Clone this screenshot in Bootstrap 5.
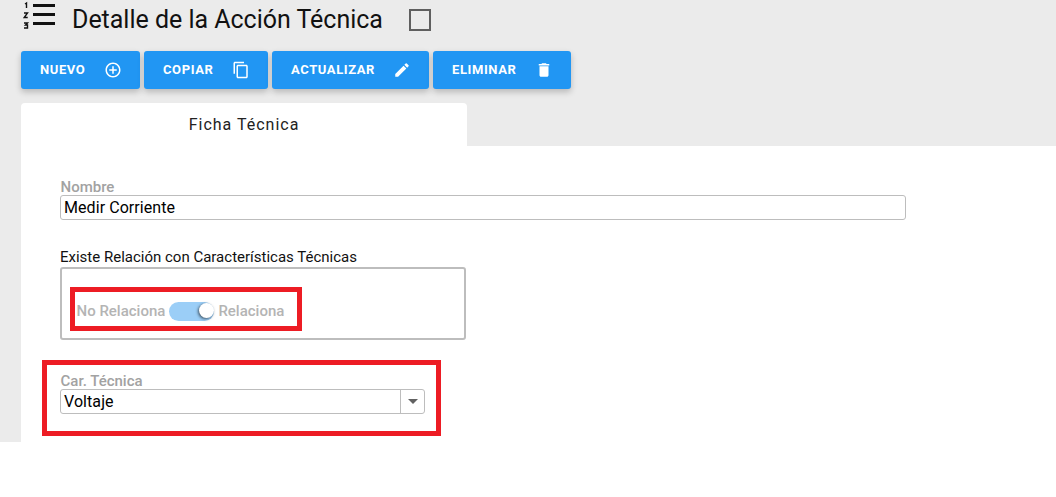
<!DOCTYPE html>
<html lang="es">
<head>
<meta charset="utf-8">
<title>Detalle de la Acción Técnica</title>
<link rel="stylesheet" href="https://cdn.jsdelivr.net/npm/bootstrap@5.3.0/dist/css/bootstrap.min.css">
<style>
html,body{height:497px;overflow:hidden;background:#fff;font-family:Roboto,"Liberation Sans",sans-serif;color:#000}
.app-shell{height:442px;background:#ebebeb;padding-left:21px;display:flex;flex-direction:column;position:relative}
.head-row{height:40px;align-items:center}
.head-icon{margin-left:2px;width:34px;height:32px;margin-top:-11px;flex:none}
.head-title{font-size:25px;font-weight:400;line-height:40px;margin:0 0 0 15px;color:#111;letter-spacing:-.02px}
.head-check{width:22px;height:22px;border:2px solid #5f5f5f;margin-left:26px;margin-top:-1px;flex:none}
.act-row{margin-top:11px;gap:4px;height:38px}
.act-btn{background:#2196f3;color:#fff;border:0;border-radius:3px;height:38px;padding:0 18px 0 19px;display:flex;align-items:center;justify-content:space-between;font-size:13px;font-weight:700;letter-spacing:.6px;box-shadow:0 3px 6px rgba(0,0,0,.22);flex:none}
.act-btn svg{width:18px;height:18px;fill:#fff;flex:none}
.btn-nuevo{width:119px}.btn-copiar{width:124px}.btn-actualizar{width:157px}.btn-eliminar{width:138px}
.tab-item{margin-top:14px;width:446px;height:43px;background:#fff;border-radius:4px 4px 0 0;text-align:center;font-size:16px;letter-spacing:1px;line-height:43px;color:#222}
.tab-body{flex:1;background:#fff;padding:33px 0 0 39px;position:relative}
.fld-label{display:block;font-size:15px;font-weight:500;line-height:16px;color:#a2a2a2;margin:0;padding-left:.5px}
.fld-input{display:block;border:1px solid #bdbdbd;border-radius:3px;background:#fff;height:25px;line-height:23px;padding-left:3px;font-size:16px;letter-spacing:.07px;color:#000}
.name-input{width:846px}
.group-label{font-size:15px;line-height:16px;color:#111;margin-top:29px}
.group-box{width:406px;height:73px;margin-top:2px;border:2px solid #bdbdbd;border-radius:3px;padding:15px 0 0 14.500px;align-items:center}
.toggle-text{font-size:15px;font-weight:500;color:#b4b4b4;line-height:20px}
.toggle-track{width:45px;height:19px;border-radius:10px;background:#9bcef7;margin:0 4px 0 4px;position:relative;flex:none}
.toggle-knob{position:absolute;right:0;top:1px;width:15px;height:15px;border-radius:50%;background:#fff;box-shadow:-1px 1px 3px rgba(0,0,0,.6)}
.car-label{margin-top:33px}
.select-wrap{width:365px;height:25px;display:flex;border:1px solid #bdbdbd;border-radius:3px}
.select-value{flex:1;line-height:23px;padding-left:3px;font-size:16px;letter-spacing:.07px}
.select-arrow{width:24px;border-left:1px solid #bdbdbd;display:flex;align-items:center;justify-content:center}
.select-arrow i{border-left:5px solid transparent;border-right:5px solid transparent;border-top:5px solid #616161;display:block}
.red-mark{position:absolute;border:5px solid #ed1c24;pointer-events:none}
.mark-a{left:70px;top:287px;width:232px;height:44px}
.mark-b{left:42px;top:360px;width:399px;height:76px}
</style>
</head>
<body>
<div class="app-shell">
  <div class="d-flex head-row">
    <svg class="head-icon" viewBox="0 0 34 32" aria-hidden="true">
      <g fill="#111"><rect x="10" y="5" width="22" height="3"/><rect x="10" y="14" width="22" height="3"/><rect x="10" y="23" width="22" height="3"/></g>
      <g fill="none" stroke="#111" stroke-width="1.4"><path d="M2 5l1.500-1V9"/><path d="M1 14h3.500L1.200 18.500h3.500"/><path d="M1 24h3.500L2.500 26h2v3H1"/></g>
    </svg>
    <h1 class="head-title">Detalle de la Acción Técnica</h1>
    <div class="head-check"></div>
  </div>
  <div class="d-flex act-row">
    <button class="act-btn btn-nuevo">NUEVO
      <svg viewBox="0 0 24 24"><path d="M13 7h-2v4H7v2h4v4h2v-4h4v-2h-4V7zm-1-5C6.480 2 2 6.480 2 12s4.480 10 10 10 10-4.480 10-10S17.520 2 12 2zm0 18c-4.410 0-8-3.590-8-8s3.590-8 8-8 8 3.590 8 8-3.590 8-8 8z"/></svg></button>
    <button class="act-btn btn-copiar">COPIAR
      <svg viewBox="0 0 24 24"><path d="M16 1H4c-1.100 0-2 .9-2 2v14h2V3h12V1zm3 4H8c-1.100 0-2 .9-2 2v14c0 1.100.9 2 2 2h11c1.100 0 2-.9 2-2V7c0-1.100-.9-2-2-2zm0 16H8V7h11v14z"/></svg></button>
    <button class="act-btn btn-actualizar">ACTUALIZAR
      <svg viewBox="0 0 24 24"><path d="M3 17.250V21h3.750L17.810 9.940l-3.750-3.750L3 17.250zM20.710 7.040a1 1 0 0 0 0-1.410l-2.340-2.340a1 1 0 0 0-1.410 0l-1.830 1.830 3.750 3.750 1.830-1.830z"/></svg></button>
    <button class="act-btn btn-eliminar">ELIMINAR
      <svg viewBox="0 0 24 24"><path d="M6 19c0 1.100.9 2 2 2h8c1.100 0 2-.9 2-2V7H6v12zM19 4h-3.500l-1-1h-5l-1 1H5v2h14V4z"/></svg></button>
  </div>
  <div class="tab-item">Ficha Técnica</div>
  <div class="tab-body">
    <label class="fld-label">Nombre</label>
    <div class="fld-input name-input">Medir Corriente</div>
    <div class="group-label">Existe Relación con Características Técnicas</div>
    <div class="d-flex group-box">
      <span class="toggle-text">No Relaciona</span>
      <span class="toggle-track"><span class="toggle-knob"></span></span>
      <span class="toggle-text">Relaciona</span>
    </div>
    <label class="fld-label car-label">Car. Técnica</label>
    <div class="select-wrap">
      <div class="select-value">Voltaje</div>
      <div class="select-arrow"><i></i></div>
    </div>
  </div>
  <div class="red-mark mark-a"></div>
  <div class="red-mark mark-b"></div>
</div>
<script src="https://cdn.jsdelivr.net/npm/bootstrap@5.3.0/dist/js/bootstrap.bundle.min.js"></script>
</body>
</html>
